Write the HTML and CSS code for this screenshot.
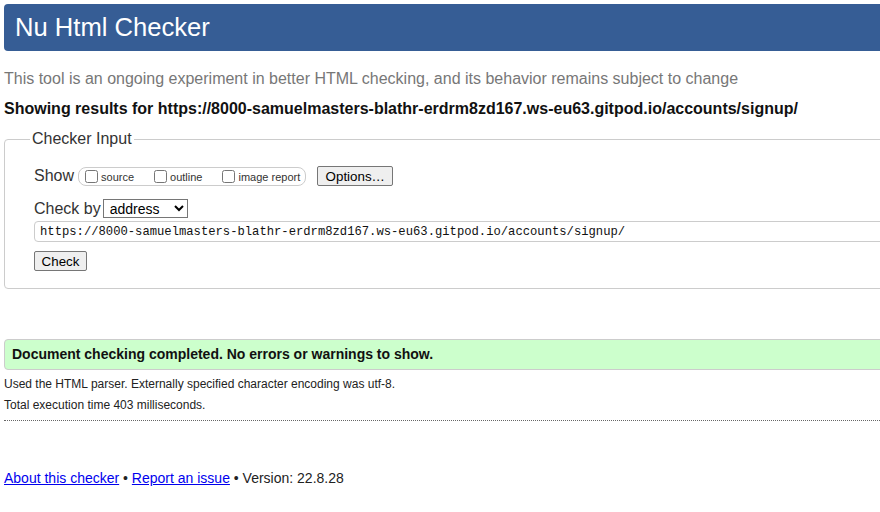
FILE: index.html
```html
<!DOCTYPE html>
<html>
<head>
<meta charset="utf-8">
<title>Nu Html Checker</title>
<link rel="stylesheet" href="styles.css">
</head>
<body>
<div class="page">
  <h1 class="header">Nu Html Checker</h1>
  <p class="intro">This tool is an ongoing experiment in better HTML checking, and its behavior remains subject to change</p>
  <p class="results">Showing results for https://8000-samuelmasters-blathr-erdrm8zd167.ws-eu63.gitpod.io/accounts/signup/</p>
  <fieldset class="input-box">
    <legend class="legend">Checker Input</legend>
    <div class="row show-row">
      <span class="label">Show</span>
      <span class="opts">
        <label class="opt"><input type="checkbox" class="cb">source</label>
        <label class="opt"><input type="checkbox" class="cb">outline</label>
        <label class="opt last"><input type="checkbox" class="cb">image report</label>
      </span>
      <button class="btn options">Options…</button>
    </div>
    <div class="row by-row">
      <span class="label">Check by</span>
      <select class="sel"><option>address</option></select>
    </div>
    <input class="url" type="text" value="https://8000-samuelmasters-blathr-erdrm8zd167.ws-eu63.gitpod.io/accounts/signup/">
    <div class="row check-row">
      <button class="btn check">Check</button>
    </div>
  </fieldset>
  <div class="success">Document checking completed. No errors or warnings to show.</div>
  <p class="details">Used the HTML parser. Externally specified character encoding was utf-8.</p>
  <p class="details">Total execution time 403 milliseconds.</p>
  <hr class="sep">
  <p class="footer"><a href="#">About this checker</a> • <a href="#">Report an issue</a> • Version: 22.8.28</p>
</div>
</body>
</html>
```
FILE: styles.css
```css
html, body {
  margin: 0;
  padding: 0;
  overflow: hidden;
  background: #fff;
}
body {
  font-family: "Liberation Sans", Arial, sans-serif;
  color: #222;
}
.page {
  width: 1200px;
  padding: 4px 0 0 4px;
}
.header {
  margin: 0;
  height: 47px;
  line-height: 47px;
  background: #365d95;
  color: #fff;
  font-weight: normal;
  font-size: 25.6px;
  padding-left: 11px;
  border-radius: 4px;
}
.intro {
  margin: 19px 0 0;
  font-size: 16px;
  line-height: 18px;
  color: #777;
}
.results {
  margin: 12px 0 0;
  font-size: 16px;
  line-height: 18px;
  font-weight: bold;
  color: #111;
}
.input-box {
  margin: 12px 0 0;
  border: 1px solid #ccc;
  border-radius: 4px;
  padding: 0 0 17px 29px;
}
.legend {
  margin-left: -4px;
  padding: 0 2px;
  font-size: 16px;
  line-height: 18px;
  color: #333;
}
.row {
  display: flex;
  align-items: center;
}
.show-row {
  margin-top: 17px;
  height: 22px;
}
.label {
  font-size: 16px;
  line-height: 18px;
  color: #333;
}
.opts {
  display: inline-flex;
  align-items: center;
  height: 19px;
  box-sizing: border-box;
  border: 1px solid #ccc;
  border-radius: 8px;
  margin-left: 4px;
  padding: 0 5px 0 2px;
}
.opt {
  display: inline-flex;
  align-items: center;
  font-size: 11px;
  line-height: 13px;
  padding-top: 2px;
  color: #333;
  margin-right: 16px;
}
.opt.last {
  margin-right: 0;
}
.cb {
  width: 13px;
  height: 13px;
  margin: -2px 3px 0 4px;
}
.btn {
  font-family: "Liberation Sans", Arial, sans-serif;
  font-size: 13.33px;
  color: #000;
  background: #efefef;
  border: 1px solid #767676;
  border-radius: 2px;
  box-sizing: border-box;
  height: 20px;
  padding: 0 6px;
}
.options {
  margin-left: 11px;
  width: 76px;
}
.by-row {
  margin-top: 11px;
  height: 21px;
}
.sel {
  margin-left: 2px;
  width: 85px;
  height: 19px;
  font-family: "Liberation Sans", Arial, sans-serif;
  font-size: 14px;
  border: 1px solid #767676;
  border-radius: 0;
  background: #fff;
  color: #000;
  padding: 0 2px;
}
.url {
  display: block;
  margin: 2px 0 0;
  width: 1150px;
  height: 21px;
  box-sizing: border-box;
  border: 1px solid #ccc;
  border-radius: 4px;
  padding: 0 5px;
  font-family: "Liberation Mono", "Courier New", monospace;
  font-size: 12.2px;
  color: #111;
}
.check-row {
  margin-top: 9px;
}
.check {
  width: 53px;
}
.success {
  margin-top: 50px;
  height: 31px;
  box-sizing: border-box;
  line-height: 29px;
  background: #ccffcc;
  border: 1px solid #cccccc;
  border-radius: 4px;
  padding-left: 7px;
  font-size: 14px;
  font-weight: bold;
  color: #111;
}
.details {
  margin: 7px 0 0;
  font-size: 12px;
  line-height: 14px;
  color: #222;
}
.sep {
  margin: 8px 0 0;
  border: 0;
  border-top: 1px dotted #666;
  height: 0;
}
.footer {
  margin: 49px 0 0;
  font-size: 14px;
  line-height: 16px;
  color: #222;
}
.footer a {
  color: #0000ee;
}
```
